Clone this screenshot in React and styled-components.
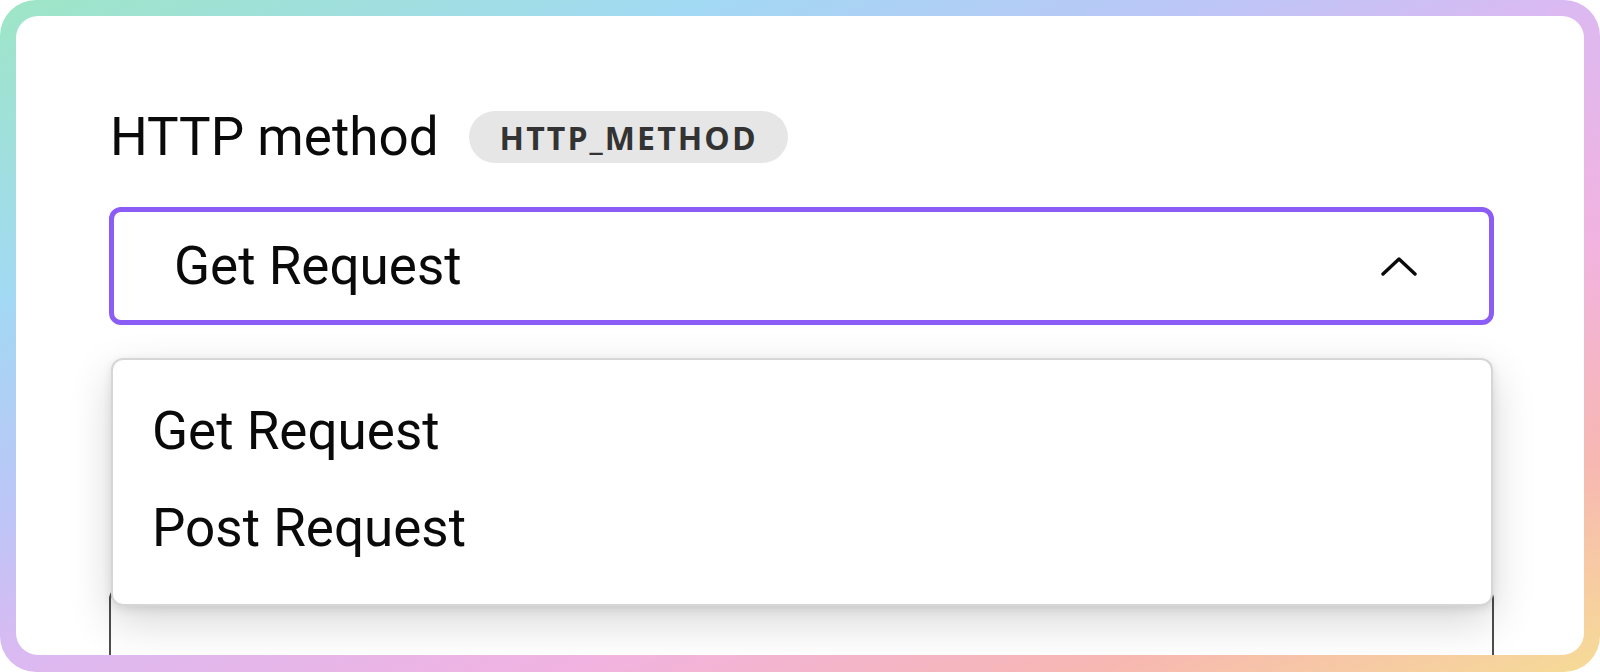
import React from 'react'
import styled, { createGlobalStyle } from 'styled-components'

const GlobalStyle = createGlobalStyle`
  html, body {
    margin: 0;
    padding: 0;
    background: #ffffff;
  }
  body {
    font-family: Roboto, "Liberation Sans", sans-serif;
  }
`

const Frame = styled.div`
  width: 1600px;
  height: 672px;
  box-sizing: border-box;
  padding: 16px 16px 17px;
  border-radius: 36px;
  background: linear-gradient(
    to bottom right,
    #9ee6c6 0%,
    #a2d9f3 22%,
    #bcc6f7 38%,
    #dcb9f1 50%,
    #f2b3e0 68%,
    #f7b7b2 84%,
    #f6dc96 100%
  );
`

const Card = styled.div`
  height: 100%;
  box-sizing: border-box;
  background: #ffffff;
  border-radius: 22px;
  overflow: hidden;
  padding: 95px 0 0 93px;
`

const Field = styled.div`
  width: 1385px;
  position: relative;
`

const LabelRow = styled.div`
  display: flex;
  align-items: center;
  gap: 30px;
  height: 52px;
`

const Label = styled.span`
  font-size: 53px;
  line-height: 52px;
  color: #0a0a0a;
  padding-left: 1px;
`

const Badge = styled.span`
  display: inline-flex;
  align-items: center;
  height: 52px;
  padding: 0 30px 0 31px;
  border-radius: 26px;
  background: #e6e6e6;
  color: #333333;
  font-family: "Open Sans", "DejaVu Sans", sans-serif;
  font-weight: 700;
  font-size: 32px;
  letter-spacing: 2.1px;
`

const Select = styled.div`
  margin-top: 44px;
  height: 118px;
  box-sizing: border-box;
  border: 5px solid #8b5cf6;
  border-radius: 12px;
  display: flex;
  align-items: center;
  justify-content: space-between;
  padding: 0 72px 0 60px;
  font-size: 53px;
  color: #0a0a0a;
`

const Menu = styled.ul`
  position: absolute;
  top: 247px;
  left: 2px;
  right: 1px;
  z-index: 2;
  margin: 0;
  list-style: none;
  box-sizing: border-box;
  padding: 23px 39px 27px;
  background: #ffffff;
  border: 2px solid #d6d6d6;
  border-radius: 12px;
  box-shadow: 0 16px 44px rgba(0, 0, 0, 0.16), 0 3px 10px rgba(0, 0, 0, 0.1);
`

const Option = styled.li`
  font-size: 53px;
  line-height: 97px;
  color: #0a0a0a;
`

const NextBox = styled.div`
  margin-top: 262px;
  height: 240px;
  border: 2px solid #4d4d4d;
  border-radius: 12px;
  background: #ffffff;
`

const Chevron = () => (
  <svg width="36" height="20" viewBox="0 0 36 20" fill="none">
    <polyline
      points="2,18 18,3 34,18"
      stroke="#0a0a0a"
      strokeWidth="3.4"
      strokeLinecap="round"
      strokeLinejoin="round"
    />
  </svg>
)

const App = () => {
  return (
    <>
      <GlobalStyle />
      <Frame>
        <Card>
          <Field>
            <LabelRow>
              <Label>HTTP method</Label>
              <Badge>HTTP_METHOD</Badge>
            </LabelRow>
            <Select>
              <span>Get Request</span>
              <Chevron />
            </Select>
            <Menu>
              <Option>Get Request</Option>
              <Option>Post Request</Option>
            </Menu>
            <NextBox />
          </Field>
        </Card>
      </Frame>
    </>
  )
}

export default App
